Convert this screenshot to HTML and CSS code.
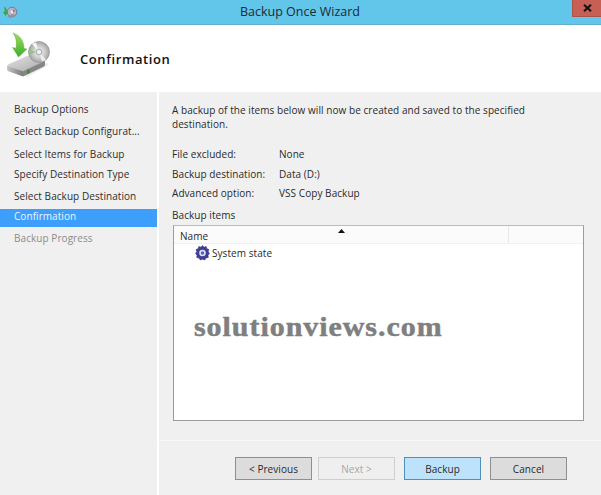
FILE: index.html
```html
<!DOCTYPE html>
<html lang="en">
<head>
<meta charset="utf-8">
<title>Backup Once Wizard</title>
<link rel="stylesheet" href="styles.css">
</head>
<body>
<div class="window">
  <header class="titlebar">
    <svg class="title-icon" width="18" height="18" viewBox="0 0 18 18">
      <circle cx="12" cy="9" r="4.8" fill="#b9b4c4" stroke="#6f6a80" stroke-width=".8"/>
      <circle cx="12" cy="9" r="1.4" fill="#e8e8f0"/>
      <path d="M13 6 15.500 8 13 9.500z" fill="#b56a6a"/>
      <path d="M7 13.500 13 11 16 12.500 10 15z" fill="#8f9296"/>
      <path d="M3.500 3.500C5.500 4 7 6 7 9L8 9 5.500 13 3 9 4.500 9C5 7 4.500 5 3.500 3.500Z" fill="#3ca53a"/>
    </svg>
    <span class="title-text">Backup Once Wizard</span>
    <button class="close" type="button" aria-label="Close">
      <svg width="9" height="8" viewBox="0 0 9 8"><path d="M1 .8 8 7.200M8 .8 1 7.200" stroke="#111" stroke-width="2"/></svg>
    </button>
  </header>
  <div class="banner">
    <svg class="banner-icon" width="46" height="48" viewBox="0 0 46 48">
      <defs>
        <linearGradient id="box" x1="0" y1="0" x2="1" y2="1">
          <stop offset="0" stop-color="#e4e4e4"/><stop offset="1" stop-color="#a8a8a8"/>
        </linearGradient>
        <linearGradient id="side" x1="0" y1="0" x2="1" y2="0">
          <stop offset="0" stop-color="#c4c4c4"/><stop offset="1" stop-color="#7a7a7a"/>
        </linearGradient>
        <radialGradient id="disc" cx=".5" cy=".5" r=".5">
          <stop offset="0" stop-color="#f4f4f4"/><stop offset=".55" stop-color="#cfcfcf"/><stop offset="1" stop-color="#a4a4a4"/>
        </radialGradient>
        <linearGradient id="arrow" x1="0" y1="0" x2="0" y2="1">
          <stop offset="0" stop-color="#a4dc58"/><stop offset="1" stop-color="#3aae2e"/>
        </linearGradient>
      </defs>
      <path d="M3 41 20 47 42 35 40 33z" fill="#000" opacity=".07"/>
      <path d="M0 36Q0 35 2 34L20 26Q21 25.500 23 26L37 30Q38.500 31 37 32L18 41Q17 41.500 15 41L1 37Z" fill="url(#box)"/>
      <path d="M0 36 16 41.200V46.500L2 41.500Q0 41 0 39Z" fill="url(#side)"/>
      <path d="M16 41.200 38 31V35Q38 36 36 37L16 46.500Z" fill="#858585"/>
      <circle cx="32" cy="22" r="10.500" fill="url(#disc)" stroke="#909090" stroke-width=".7"/>
      <path d="M32 22 25 14A10 10 0 0 1 29 12.500Z" fill="#f5f5f5"/>
      <path d="M32 22 39 29.500A10 10 0 0 1 35 31.500Z" fill="#ececec"/>
      <circle cx="32" cy="22" r="2.800" fill="#f0f0f0" stroke="#8a8a8a" stroke-width=".7"/>
      <path d="M22 19.500 29 22 22 25z" fill="#86c86e" opacity=".85"/>
      <path d="M6 3C12 5 17 10 17 18.500L20 19 11.500 27 5.500 17.500 9 18.200C10 12 9 7 6 3Z" fill="url(#arrow)" stroke="#4aa838" stroke-width=".4"/>
      <rect x="20.500" y="39.500" width="1.800" height="4" fill="#3f7d3f"/>
    </svg>
    <h1 class="banner-title">Confirmation</h1>
  </div>
  <div class="body">
    <nav class="steps">
      <div class="step step-a">Backup Options</div>
      <div class="step step-b">Select Backup Configurat...</div>
      <div class="step step-c">Select Items for Backup</div>
      <div class="step step-d">Specify Destination Type</div>
      <div class="step step-b">Select Backup Destination</div>
      <div class="step step-current">Confirmation</div>
      <div class="step step-e step-disabled">Backup Progress</div>
    </nav>
    <main class="content">
      <div class="pane">
        <p class="intro">A backup of the items below will now be created and saved to the specified destination.</p>
        <dl class="facts">
          <div class="fact"><dt>File excluded:</dt><dd>None</dd></div>
          <div class="fact"><dt>Backup destination:</dt><dd>Data (D:)</dd></div>
          <div class="fact fact-last"><dt>Advanced option:</dt><dd>VSS Copy Backup</dd></div>
        </dl>
        <div class="list-label">Backup items</div>
        <div class="list">
          <div class="list-head">
            <div class="col col-name">Name
              <svg class="sort" width="7" height="4" viewBox="0 0 7 4"><path d="M3.500 0 7 4H0z" fill="#111"/></svg>
            </div>
            <div class="col col-rest"></div>
          </div>
          <div class="list-row">
            <svg class="gear" width="15" height="16" viewBox="0 0 15 16">
              <path d="M7.500 .5 9 2.200 11.200 1.500 11.900 3.700 14 4.600 13.200 6.700 14.500 8.500 13 10.200 13.300 12.500 11 13 9.700 15 7.500 14.200 5.300 15 4 13 1.700 12.500 2 10.200 .5 8.500 1.800 6.700 1 4.600 3.100 3.700 3.800 1.500 6 2.200Z" fill="#3f3f99" stroke="#2a2a70" stroke-width=".5"/>
              <circle cx="7.500" cy="8" r="3.300" fill="#dfe4f4"/>
              <circle cx="7.500" cy="8" r="1.700" fill="#5560b0"/>
            </svg>
            <span>System state</span>
          </div>
        </div>
      </div>
      <footer class="actions">
        <div class="btn-pair">
          <button class="btn" type="button">&lt; Previous</button>
          <button class="btn btn-disabled" type="button">Next &gt;</button>
        </div>
        <button class="btn btn-primary" type="button">Backup</button>
        <button class="btn" type="button">Cancel</button>
      </footer>
    </main>
  </div>
  <div class="watermark">solutionviews.com</div>
</div>
</body>
</html>
```
FILE: styles.css
```css
* { box-sizing: border-box; }
html, body { margin: 0; padding: 0; }
body { background: #fff; color: #2a2a2a; font-family: "Open Sans", "Noto Sans", sans-serif; font-size: 10px; letter-spacing: .06px; }
.window { position: relative; width: 601px; height: 495px; display: flex; flex-direction: column; overflow: hidden; }

.titlebar { position: relative; flex: 0 0 25px; display: flex; align-items: center; justify-content: center; background: #62c6ea; border-bottom: 1px solid #62aecb; }
.title-icon { position: absolute; left: 0; top: 3px; }
.title-text { font-size: 12.500px; color: #1c2a33; margin: -2px 1px 0 0; letter-spacing: 0; }
.close { position: absolute; right: 0; top: 0; width: 29px; height: 17px; padding: 0; border: 0; border-left: 1px solid #a9524a; border-bottom: 1px solid #a9524a; background: #c75f55; display: flex; align-items: center; justify-content: center; }

.banner { flex: 0 0 67px; display: flex; align-items: center; background: #fff; padding-left: 7px; }
.banner-icon { flex: none; margin-top: -9px; }
.banner-title { margin: 0 0 0 27px; font-size: 13px; font-weight: 600; color: #111; letter-spacing: .6px; }

.body { flex: 1; display: flex; gap: 2px; min-height: 0; }
.steps { flex: 0 0 157px; background: #f0f0f0; padding-top: 7px; }
.step { display: flex; align-items: center; padding-left: 14px; color: #2e2e2e; }
.step-a { height: 21px; padding-bottom: 2px; }
.step-b { height: 22px; }
.step-c { height: 23px; }
.step-d { height: 20px; padding-bottom: 2px; }
.step-e { height: 21px; }
.step-current { height: 18px; margin-top: 2px; padding-bottom: 4px; background: #3d9ffb; color: #eaf4ff; }
.step-disabled { color: #8c8c8c; }

.content { flex: 1; display: flex; flex-direction: column; background: #f0f0f0; }
.pane { flex: 0 0 349px; padding: 11px 17px 0 13px; border-bottom: 1px solid #f8f8f8; }
.intro { margin: 0 0 13px; line-height: 14px; width: 380px; color: #2a2a2a; }
.facts { margin: 0; }
.fact { display: flex; height: 20px; align-items: center; }
.fact-last { height: 18px; }
.fact dt { width: 107px; }
.fact dd { margin: 0; }
.list-label { margin-top: 6px; height: 15px; line-height: 14px; }
.list { height: 196px; margin: 2px 0 0 1px; background: #fff; border: 1px solid #9c9c9c; border-top-color: #bcbcbc; }
.list-head { display: flex; height: 18px; background: #fbfbfb; border-bottom: 1px solid #f0f0f0; }
.col { position: relative; height: 100%; line-height: 20px; }
.col-name { width: 335px; padding-left: 6px; border-right: 1px solid #e8e8e8; }
.col-rest { flex: 1; }
.sort { position: absolute; left: 164px; top: 3px; }
.list-row { display: flex; align-items: center; gap: 2px; padding: 0 0 0 21px; height: 18px; }
.gear { flex: none; }

.actions { flex: 1; display: flex; align-items: flex-start; gap: 9px; padding: 16px 0 0 76px; }
.btn-pair { display: flex; gap: 6px; }
.btn { width: 77px; height: 23px; padding: 0; font: inherit; letter-spacing: inherit; color: #2a2a2a; background: #dcdcdc; border: 1px solid #8f8f8f; }
.btn-disabled { background: #efefef; border-color: #cfcfcf; color: #a8a8a8; }
.btn-primary { background: #bde3fc; border-color: #4f90b8; }

.watermark { position: absolute; left: 194px; top: 312px; font-family: "Liberation Serif", serif; font-weight: 700; font-size: 28px; line-height: 29px; letter-spacing: .9px; color: #7f7f7f; -webkit-text-stroke: .5px #7f7f7f; white-space: nowrap; transform: scaleX(1.07); transform-origin: left center; }
```
